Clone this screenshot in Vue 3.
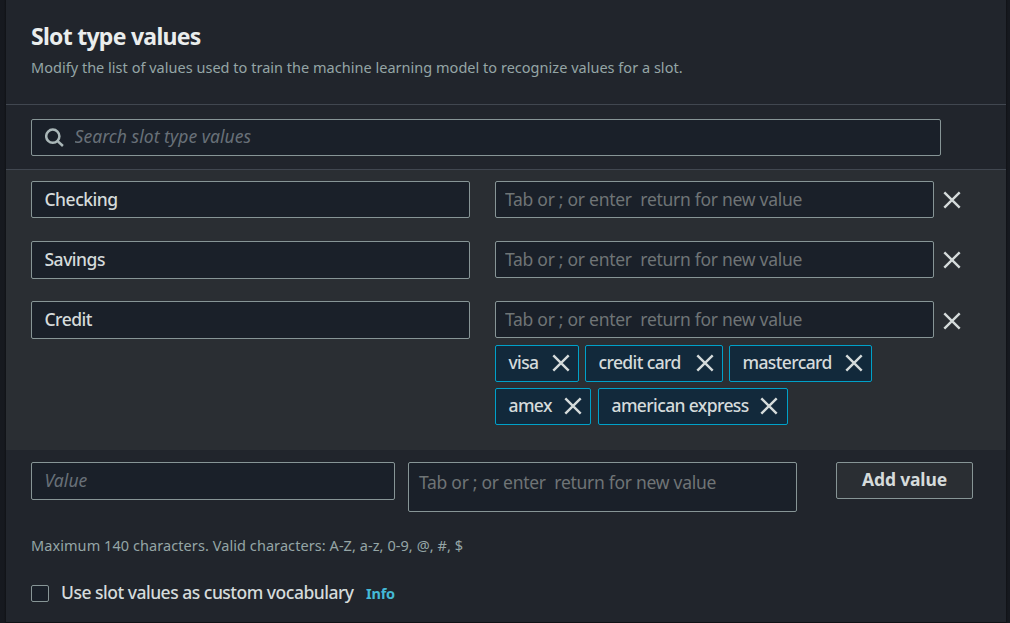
<script setup>
const hint = 'Tab or ; or enter  return for new value'
const rows = [
  { value: 'Checking', synonyms: [] },
  { value: 'Savings', synonyms: [] },
  {
    value: 'Credit',
    synonyms: [
      { text: 'visa', cls: 'w-visa' },
      { text: 'credit card', cls: 'w-credit' },
      { text: 'mastercard', cls: 'w-master' },
      { text: 'amex', cls: 'w-amex' },
      { text: 'american express', cls: 'w-american' },
    ],
  },
]
</script>

<template>
  <div class="page">
    <section class="panel">
      <header class="head">
        <h2><span>Slot type values</span></h2>
        <p><span>Modify the list of values used to train the machine learning model to recognize values for a slot.</span></p>
      </header>

      <div class="search-bar">
        <div class="search">
          <svg width="20" height="20" viewBox="0 0 20 20" fill="none" stroke="#aab7b8" stroke-width="2.5">
            <circle cx="7.8" cy="8.2" r="6.6" />
            <path d="M12.4 12.8L17.9 18" />
          </svg>
          <input type="text" placeholder="Search slot type values" />
        </div>
      </div>

      <div class="rows">
        <div v-for="(row, i) in rows" :key="row.value" class="row">
          <input class="field name" :class="{ tall: i > 0 }" type="text" :value="row.value" />
          <div class="synonyms">
            <input class="field hint" type="text" :placeholder="hint" />
            <div v-if="row.synonyms.length" class="tokens">
              <span v-for="s in row.synonyms" :key="s.text" class="token" :class="s.cls">
                <span class="label">{{ s.text }}</span>
                <svg class="x" width="18" height="18" viewBox="0 0 18 18"><path d="M1.3 1.3L16.7 16.7M16.7 1.3L1.3 16.7" /></svg>
              </span>
            </div>
          </div>
          <button class="remove" :class="{ low: i === 2 }" aria-label="Remove">
            <svg class="x" width="18" height="18" viewBox="0 0 18 18"><path d="M1.3 1.3L16.7 16.7M16.7 1.3L1.3 16.7" /></svg>
          </button>
        </div>
      </div>

      <footer class="foot">
        <div class="add">
          <input class="field new-value" type="text" placeholder="Value" />
          <textarea class="field area" :placeholder="hint"></textarea>
          <button class="add-btn"><span>Add value</span></button>
        </div>
        <p class="note"><span>Maximum 140 characters. Valid characters: A-Z, a-z, 0-9, @, #, $</span></p>
        <label class="check">
          <input type="checkbox" />
          <span class="check-text">Use slot values as custom vocabulary</span>
          <a class="info">Info</a>
        </label>
      </footer>
    </section>
  </div>
</template>

<style>
body {
  background: #16191f;
  overflow: hidden;
}
</style>

<style scoped>
* {
  box-sizing: border-box;
}
.page {
  width: 1010px;
  height: 623px;
  padding: 0 4px 1px 6px;
  background: linear-gradient(90deg, #16191f 0, #16191f 4px, #101216 6px, #101216 1006px, #16191f 1008px);
  font-family: "Noto Sans", "Open Sans", sans-serif;
  font-size: 17.5px;
  font-weight: 500;
  letter-spacing: -0.5px;
  color: #d5dbdb;
}
.panel {
  height: 622px;
  background: #21252c;
}
.head {
  height: 105px;
  padding: 20px 25px 0;
  border-bottom: 1px solid #414750;
}
h2 {
  margin: 0;
  font-size: 23px;
  line-height: 32px;
  font-weight: 700;
  letter-spacing: -0.73px;
  color: #eaeded;
}
p {
  margin: 0;
  white-space: nowrap;
  color: #95a5a6;
  font-size: 14.5px;
  font-weight: 400;
  letter-spacing: 0.02px;
}
.head p {
  line-height: 20px;
  margin-top: 5px;
}
.search-bar {
  height: 65px;
  padding: 14px 65px 0 25px;
  border-bottom: 1px solid #414750;
}
.search {
  display: flex;
  align-items: center;
  height: 37px;
  padding-left: 13px;
  background: #1a2029;
  border: 1px solid #879596;
  border-radius: 2px;
}
input,
textarea,
button {
  font: inherit;
  letter-spacing: inherit;
  color: inherit;
  outline: none;
}
.search input {
  flex: 1;
  height: 35px;
  margin-left: 9.5px;
  padding: 0 0 3px;
  border: 0;
  background: none;
}
::placeholder {
  color: #6f7476;
  font-weight: 400;
  opacity: 1;
}
.search input::placeholder,
.new-value::placeholder {
  font-style: italic;
  letter-spacing: 0.05px;
  color: #687078;
}
.rows {
  height: 280px;
  padding: 11px 0 0 25px;
  background: #2a2e33;
}
.row {
  display: flex;
  align-items: flex-start;
  min-height: 60px;
}
.field {
  display: block;
  height: 37px;
  margin: 0;
  background: #1a2029;
  border: 1px solid #879596;
  border-radius: 2px;
  padding: 0 12.5px 2px;
}
.name {
  width: 439px;
}
.name.tall {
  height: 38px;
}
.synonyms {
  width: 439px;
  margin-left: 25px;
}
.hint,
.area {
  letter-spacing: -0.28px;
}
.hint {
  width: 439px;
  padding: 0 9px 2px;
}
.tokens {
  display: flex;
  flex-wrap: wrap;
  gap: 6px;
  margin-top: 7px;
}
.token {
  display: flex;
  align-items: center;
  justify-content: space-between;
  height: 37px;
  padding: 0 8px 1px 12.5px;
  background: #12293b;
  border: 1px solid #00a1c9;
  border-radius: 2px;
  white-space: nowrap;
}
.label {
  padding-bottom: 2px;
  letter-spacing: -0.62px;
}
.w-visa {
  width: 84px;
}
.w-credit {
  width: 138px;
}
.w-master {
  width: 143px;
}
.w-amex {
  width: 96px;
  margin-right: 1px;
}
.w-american {
  width: 190px;
  padding-right: 9px;
}
.x {
  display: block;
  flex: none;
  fill: none;
  stroke: #d5dbdb;
  stroke-width: 2.4;
}
.remove {
  margin: 10px 0 0 9px;
  padding: 0;
  border: 0;
  background: none;
}
.remove.low {
  margin-top: 11px;
}
.foot {
  padding: 12px 25px 0;
}
.add {
  display: flex;
  align-items: flex-start;
  height: 50px;
}
.new-value {
  width: 364px;
  height: 38px;
}
.area {
  width: 389px;
  height: 50px;
  margin-left: 13px;
  padding: 7px 10px;
  line-height: 24px;
  resize: none;
  overflow: hidden;
}
.add-btn {
  width: 137px;
  height: 37px;
  margin-left: 39px;
  padding: 0 0 3px;
  background: #2a2e33;
  border: 1px solid #879596;
  border-radius: 2px;
  font-weight: 700;
  letter-spacing: -0.15px;
}
.note {
  margin-top: 23px;
  line-height: 20px;
  letter-spacing: 0.07px;
}
.check {
  display: flex;
  align-items: center;
  height: 24px;
  margin-top: 25px;
  white-space: nowrap;
}
.check input {
  appearance: none;
  width: 18px;
  height: 17px;
  margin: 3px 12px 0 0;
  background: #1a2029;
  border: 1px solid #879596;
  border-radius: 2px;
}
.info {
  margin: 2px 0 0 12.5px;
  font-size: 14.5px;
  font-weight: 700;
  letter-spacing: -0.25px;
  color: #44b9d6;
}
</style>
